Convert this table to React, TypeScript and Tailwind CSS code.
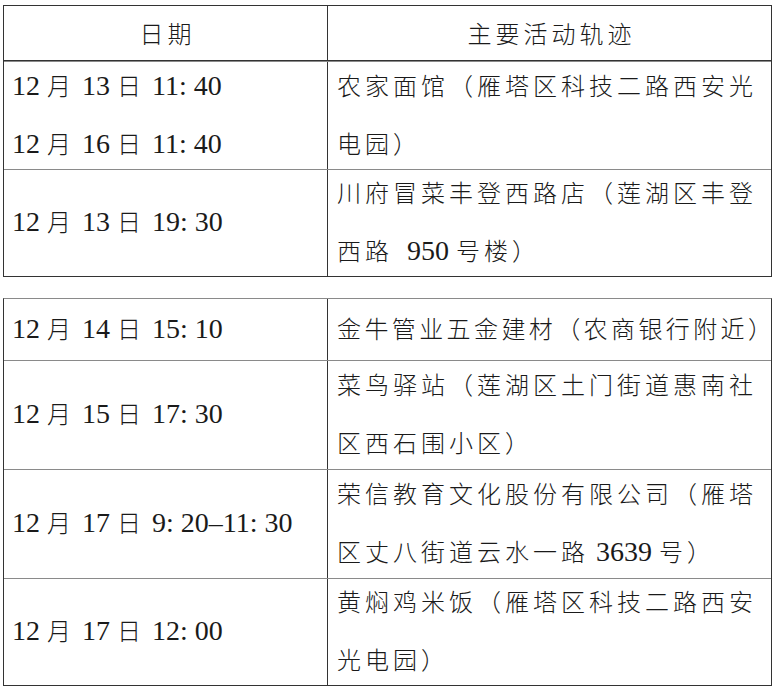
import React from "react";

const CJK = /[\u3000-\u9fff\uff00-\uffef]/;

// split a line into CJK runs (grid-spaced) and latin runs (Times-like digits)
function Txt({ s, tight }: { s: string; tight?: boolean }) {
  const parts = s.match(/[\u3000-\u9fff\uff00-\uffef]+|[^\u3000-\u9fff\uff00-\uffef]+/g) ?? [];
  return (
    <>
      {parts.map((p, i) =>
        CJK.test(p) ? (
          <span
            key={i}
            className={`font-['Noto_Sans_CJK_SC',sans-serif] text-[24px] font-light ${
              tight ? "tracking-[3.4px]" : "tracking-[4px]"
            }`}
          >
            {p}
          </span>
        ) : (
          <span key={i} className="font-['Liberation_Serif',serif] text-[28px]">
            {p}
          </span>
        )
      )}
    </>
  );
}

type Row = { date: string[]; place: string[]; h: string; top?: string; tight?: boolean };

const table1: Row[] = [
  {
    date: ["12 月 13 日 11: 40", "12 月 16 日 11: 40"],
    place: ["农家面馆（雁塔区科技二路西安光", "电园）"],
    h: "h-[108px]",
    top: "border-[#8a8a8a]",
  },
  {
    date: ["12 月 13 日 19: 30"],
    place: ["川府冒菜丰登西路店（莲湖区丰登", "西路  950 号楼）"],
    h: "h-[107px]",
    top: "border-[#8a8a8a]",
  },
];

const table2: Row[] = [
  {
    date: ["12 月 14 日 15: 10"],
    place: ["金牛管业五金建材（农商银行附近）"],
    h: "h-[61px]",
    tight: true,
  },
  {
    date: ["12 月 15 日 17: 30"],
    place: ["菜鸟驿站（莲湖区土门街道惠南社", "区西石围小区）"],
    h: "h-[109px]",
    top: "border-[#8a8a8a]",
  },
  {
    date: ["12 月 17 日 9: 20–11: 30"],
    place: ["荣信教育文化股份有限公司（雁塔", "区丈八街道云水一路 3639 号）"],
    h: "h-[109px]",
    top: "border-[#8a8a8a]",
  },
  {
    date: ["12 月 17 日 12: 00"],
    place: ["黄焖鸡米饭（雁塔区科技二路西安", "光电园）"],
    h: "h-[107px]",
    top: "border-[#8a8a8a]",
  },
];

function TableRow({ row, first }: { row: Row; first: boolean }) {
  return (
    <div className={`flex ${row.h} ${first ? "" : "border-t"} ${row.top ?? "border-[#333]"}`}>
      <div className="flex w-[324px] shrink-0 flex-col justify-center border-r border-[#333] pl-[8px] leading-[54px] whitespace-pre">
        {row.date.map((l) => (
          <div key={l}>
            <Txt s={l} />
          </div>
        ))}
      </div>
      <div className="flex min-w-0 flex-1 flex-col justify-center pl-[9px] leading-[54px] whitespace-pre">
        {row.place.map((l) => (
          <div key={l}>
            <Txt s={l} tight={row.tight} />
          </div>
        ))}
      </div>
    </div>
  );
}

export default function App() {
  return (
    <div className="h-[695px] w-[776px] overflow-hidden bg-white pl-[3px] pt-[5px] text-[#1a1a1a]">
      <div className="w-[769px] border border-[#333]">
        <div className="flex h-[55px] border-b border-[#333]">
          <div className="flex w-[324px] shrink-0 items-center justify-center border-r border-[#333] pl-[4px]">
            <Txt s="日期" />
          </div>
          <div className="flex flex-1 items-center justify-center pl-[4px]">
            <Txt s="主要活动轨迹" />
          </div>
        </div>
        {table1.map((r, i) => (
          <TableRow key={i} row={r} first={false} />
        ))}
      </div>

      <div className="mt-[21px] w-[769px] border border-[#333] border-t-[#8a8a8a]">
        {table2.map((r, i) => (
          <TableRow key={i} row={r} first={i === 0} />
        ))}
      </div>
    </div>
  );
}
